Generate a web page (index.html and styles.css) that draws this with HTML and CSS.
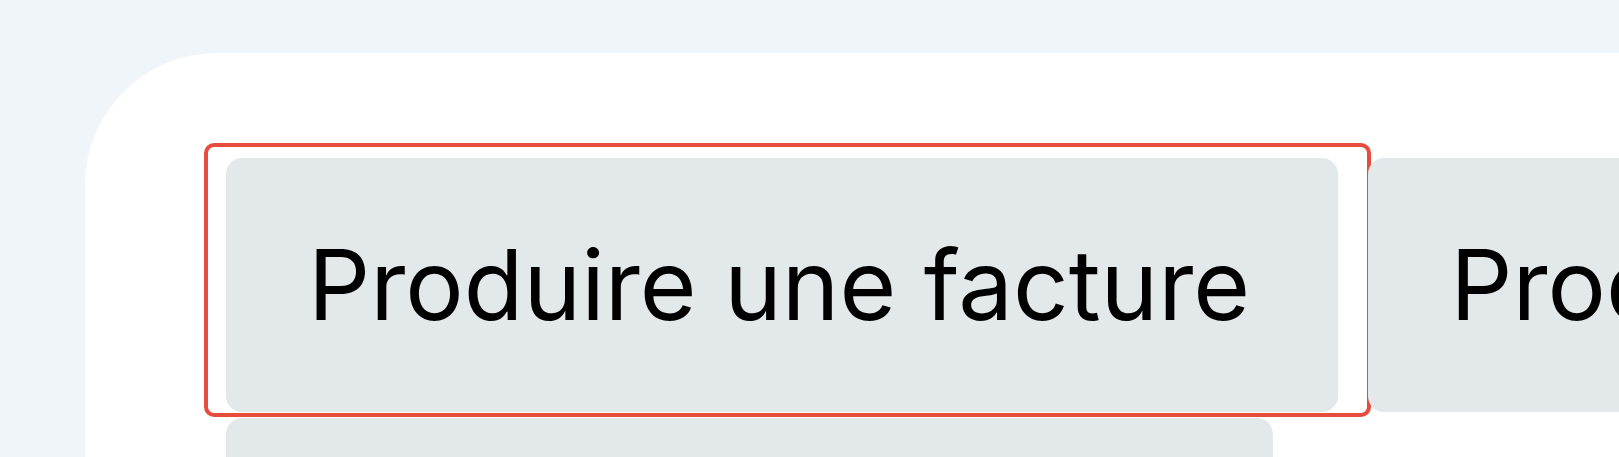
FILE: index.html
```html
<!DOCTYPE html>
<html lang="fr">
<head>
  <meta charset="UTF-8">
  <meta name="viewport" content="width=device-width, initial-scale=1.0">
  <title>Actions</title>
  <link rel="stylesheet" href="styles.css">
</head>
<body>
  <div class="panel">
    <!-- Action buttons -->
    <div class="actions">
      <button class="action selected">
        Produire une facture
        <span class="highlight"></span>
      </button>
      <button class="action">Produire un devis</button>
      <button class="action">Produire un avoir</button>
    </div>
  </div>
</body>
</html>
```

FILE: styles.css
```css
* {
  margin: 0;
  padding: 0;
  box-sizing: border-box;
}

body {
  font-family: Inter, "Noto Sans", sans-serif;
  background-color: #f0f5f9;
  height: 100vh;
  overflow: hidden;
  padding: 53px 0 0 85px;
}

.panel {
  background-color: #fff;
  border-radius: 132px 0 0 0;
  padding: 105px 0 0 141px;
  min-height: 600px;
  width: 2000px;
}

.actions {
  display: flex;
  flex-wrap: wrap;
  width: 2400px;
  gap: 6px 30px;
}

.action {
  position: relative;
  font-family: inherit;
  font-size: 97.5px;
  color: #000;
  background-color: #e3e8eb;
  border: none;
  border-radius: 16px;
  height: 254px;
  padding: 0 88px 0 82px;
  cursor: pointer;
}

.action:nth-child(3) {
  flex-basis: 100%;
  max-width: 1047px;
}

/* Red outline drawn over the selected button */
.highlight {
  position: absolute;
  top: -15px;
  left: -22px;
  right: -33px;
  bottom: -5px;
  border: 4px solid #e74c3c;
  border-radius: 10px;
  pointer-events: none;
}
```
